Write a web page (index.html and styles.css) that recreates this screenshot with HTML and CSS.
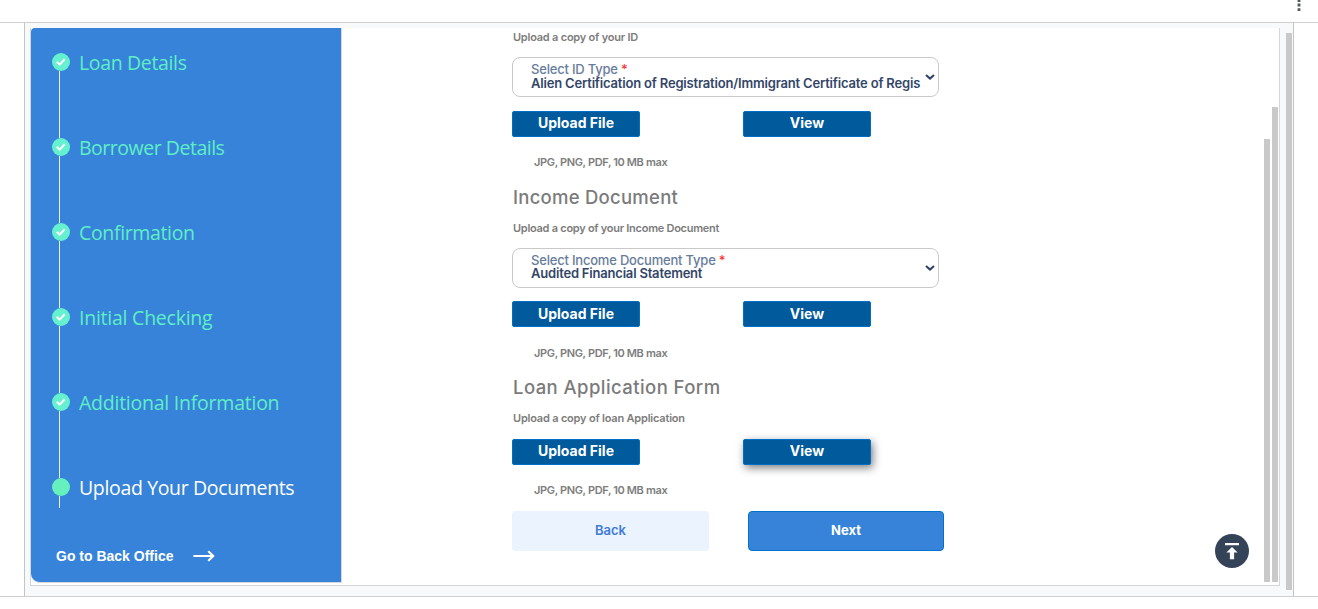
FILE: index.html
```html
<!DOCTYPE html>
<html lang="en">
<head>
<meta charset="utf-8">
<title>Upload Your Documents</title>
<link rel="stylesheet" href="styles.css">
</head>
<body>
<header class="topbar">
  <svg class="kebab" width="4" height="16" viewBox="0 0 4 16"><path d="M.6 0h2.8v2H.6zM.6 3.6h2.8v2.8H.6zM.6 8.3h2.8v2.8H.6z" fill="#55585b"/></svg>
</header>
<div class="stage">
  <div class="frame">
    <div class="panel">
      <aside class="sidebar">
        <ol class="steps">
          <li class="step"><span class="marker"><span class="dot"><svg width="18" height="18" viewBox="0 0 18 18"><path d="M4.8 8.7l2.9 2.9 5-5.3"/></svg></span></span><span class="label s1">Loan Details</span></li>
          <li class="step"><span class="marker"><span class="dot"><svg width="18" height="18" viewBox="0 0 18 18"><path d="M4.8 8.7l2.9 2.9 5-5.3"/></svg></span></span><span class="label s2">Borrower Details</span></li>
          <li class="step"><span class="marker"><span class="dot"><svg width="18" height="18" viewBox="0 0 18 18"><path d="M4.8 8.7l2.9 2.9 5-5.3"/></svg></span></span><span class="label s3">Confirmation</span></li>
          <li class="step"><span class="marker"><span class="dot"><svg width="18" height="18" viewBox="0 0 18 18"><path d="M4.8 8.7l2.9 2.9 5-5.3"/></svg></span></span><span class="label s4">Initial Checking</span></li>
          <li class="step"><span class="marker"><span class="dot"><svg width="18" height="18" viewBox="0 0 18 18"><path d="M4.8 8.7l2.9 2.9 5-5.3"/></svg></span></span><span class="label s5">Additional Information</span></li>
          <li class="step current"><span class="marker"><span class="dot"></span></span><span class="label s6">Upload Your Documents</span></li>
        </ol>
        <a class="office"><span>Go to Back Office</span><svg width="22" height="12" viewBox="0 0 22 12"><path d="M1.2 6h19M15.8 1.8L20.300 6l-4.500 4.200"/></svg></a>
      </aside>
      <main class="content">
        <section class="doc first">
          <p class="sub">Upload a copy of your ID</p>
          <div class="select"><div class="field"><span class="caption">Select ID Type <b>*</b></span><span class="value v1">Alien Certification of Registration/Immigrant Certificate of Regis</span></div><svg class="chev" width="10" height="6" viewBox="0 0 10 6"><path d="M1 .9l4 3.7L9 .9"/></svg></div>
          <div class="buttons"><button class="btn">Upload File</button><button class="btn">View</button></div>
          <p class="hint">JPG, PNG, PDF, 10 MB max</p>
        </section>
        <section class="doc income">
          <h2>Income Document</h2>
          <p class="sub">Upload a copy of your Income Document</p>
          <div class="select"><div class="field"><span class="caption">Select Income Document Type <b>*</b></span><span class="value v2">Audited Financial Statement</span></div><svg class="chev" width="10" height="6" viewBox="0 0 10 6"><path d="M1 .9l4 3.7L9 .9"/></svg></div>
          <div class="buttons"><button class="btn">Upload File</button><button class="btn">View</button></div>
          <p class="hint">JPG, PNG, PDF, 10 MB max</p>
        </section>
        <section class="doc loan">
          <h2>Loan Application Form</h2>
          <p class="sub">Upload a copy of loan Application</p>
          <div class="buttons"><button class="btn">Upload File</button><button class="btn raised">View</button></div>
          <p class="hint">JPG, PNG, PDF, 10 MB max</p>
        </section>
        <div class="nav"><button class="back">Back</button><button class="next">Next</button></div>
      </main>
      <div class="thumb thumb-a"></div>
      <div class="thumb thumb-b"></div>
      <button class="to-top"><svg width="34" height="34" viewBox="0 0 34 34"><path d="M10 9h14v2.2H10zM17 13l5.6 5.6h-3.5V25.200h-4.200V18.600h-3.500z" fill="#fff"/></svg></button>
    </div>
    <div class="thumb thumb-c"></div>
  </div>
</div>
</body>
</html>
```
FILE: styles.css
```css
* { box-sizing: border-box; }
body { margin: 0; background: #fff; font-family: Inter, "Open Sans", sans-serif; overflow: hidden; }
p, h2, ol { margin: 0; padding: 0; }
button { font-family: inherit; padding: 0; }
.topbar { height: 23px; border-bottom: 1px solid #cfcfd1; display: flex; justify-content: flex-end; padding-right: 17px; }
.stage { height: 574px; border-bottom: 1px solid #cfcfd1; padding: 0 24px; }
.frame { width: 1270px; height: 573px; border: solid #c4c4c4; border-width: 0 1px; background: #f8f9fb; display: flex; padding: 5px 0 0 5px; }
.panel { position: relative; width: 1250px; height: 558px; background: #fff; border: 1px solid #d5d6d8; border-top: 0; display: flex; }
.sidebar { width: 311px; height: 555px; background: #3783d9; border-right: 1px solid #d5d8dc; border-bottom: 1px solid #d5d8dc; border-radius: 4px 0 0 9px; padding: 25px 0 0 21px; }
.steps { list-style: none; }
.step { display: flex; height: 85px; gap: 9px; }
.current { height: 30px; }
.marker { display: flex; flex-direction: column; width: 18px; }
.marker::after { content: ""; flex: 1; width: 1px; margin-left: 7px; background: #e8f1fb; }
.dot { width: 18px; height: 18px; border-radius: 50%; background: #65f0cf; }
.dot svg { display: block; fill: none; stroke: #fff; stroke-width: 2; }
.current .dot { background: #65f0bd; }
.label { font: 19.5px/19px "Open Sans", sans-serif; color: #5eefc5; white-space: nowrap; letter-spacing: -.35px; }
.s2 { letter-spacing: -.48px; }
.s4, .s5 { letter-spacing: -.24px; }
.current .label { color: #fff; }
.office { display: flex; align-items: center; height: 20px; margin: 38px 0 0 4px; gap: 20px; color: #fff; font: bold 14px "Liberation Sans", sans-serif; white-space: nowrap; }
.office svg { fill: none; stroke: #fff; stroke-width: 2.2; stroke-linecap: round; stroke-linejoin: round; }
.content { margin-left: 170px; width: 450px; color: #7c7c7c; }
.sub, .hint { font-size: 11px; line-height: 20px; font-weight: 600; white-space: nowrap; letter-spacing: -.22px; color: #7d7d7d; }
.sub { padding-left: 1px; margin-bottom: 10px; }
.income .sub { letter-spacing: -.27px; }
.first .sub { line-height: 19px; }
.hint { padding-left: 22px; margin-top: 15px; letter-spacing: -.36px; }
.doc h2 { font-size: 18.5px; line-height: 30px; font-weight: 500; margin: 10px 0 6px; padding-left: 1px; color: #7b7b7b; white-space: nowrap; letter-spacing: .25px; }
.select { width: 427px; height: 40px; border: 1px solid #c9c9c9; border-radius: 8px; display: flex; align-items: center; padding: 0 3px 0 18px; }
.field { flex: none; width: 390px; margin-right: 4px; white-space: nowrap; font-size: 13px; letter-spacing: -.2px; }
.caption, .value { display: block; }
.caption { font-weight: 550; color: #687d9c; line-height: 11px; }
.caption b { color: #f33; font-weight: 500; }
.value { font-weight: 600; color: #334669; line-height: 16px; }
.v1 { letter-spacing: -.18px; }
.v2 { margin-top: -1px; }
.chev { flex: none; fill: none; stroke: #2f4265; stroke-width: 2; }
.buttons { display: flex; gap: 103px; margin-top: 14px; }
.btn { width: 128px; height: 26px; border: 1px solid #0070c6; border-radius: 2px; background: #005a9c; color: #fff; font-size: 14px; line-height: 24px; font-weight: 700; }
.first .btn, .loan .btn { padding-bottom: 2px; line-height: 22px; }
.raised { box-shadow: 2px 3px 8px rgba(0,0,0,.5); }
.income .buttons { margin-top: 13px; }
.income .hint { margin-top: 16px; }
.loan h2 { margin-top: 9px; letter-spacing: .43px; }
.loan .sub { margin-bottom: 0; letter-spacing: -.2px; }
.loan .buttons { margin-top: 11px; }
.nav { display: flex; gap: 39px; margin-top: 11px; }
.nav button { height: 40px; border-radius: 4px; font-size: 13px; font-weight: 600; line-height: 36px; padding-bottom: 2px; }
.nav .back { width: 197px; border: 0; background: #ebf3ff; color: #417bd8; }
.nav .next { width: 196px; border: 1px solid #0072ca; background: #3783d9; color: #fff; font-weight: 700; }
.thumb { width: 6px; background: #c9c9c9; }
.thumb-a { height: 443px; margin: 111px 2px 0 auto; }
.thumb-b { height: 475px; margin: 79px 1px 0 0; }
.thumb-c { height: 557px; margin: 5px 0 0 6px; }
.to-top { position: absolute; left: 1184px; top: 506px; width: 34px; height: 34px; border: 0; border-radius: 50%; background: #344358; }
.to-top svg { display: block; }
```
